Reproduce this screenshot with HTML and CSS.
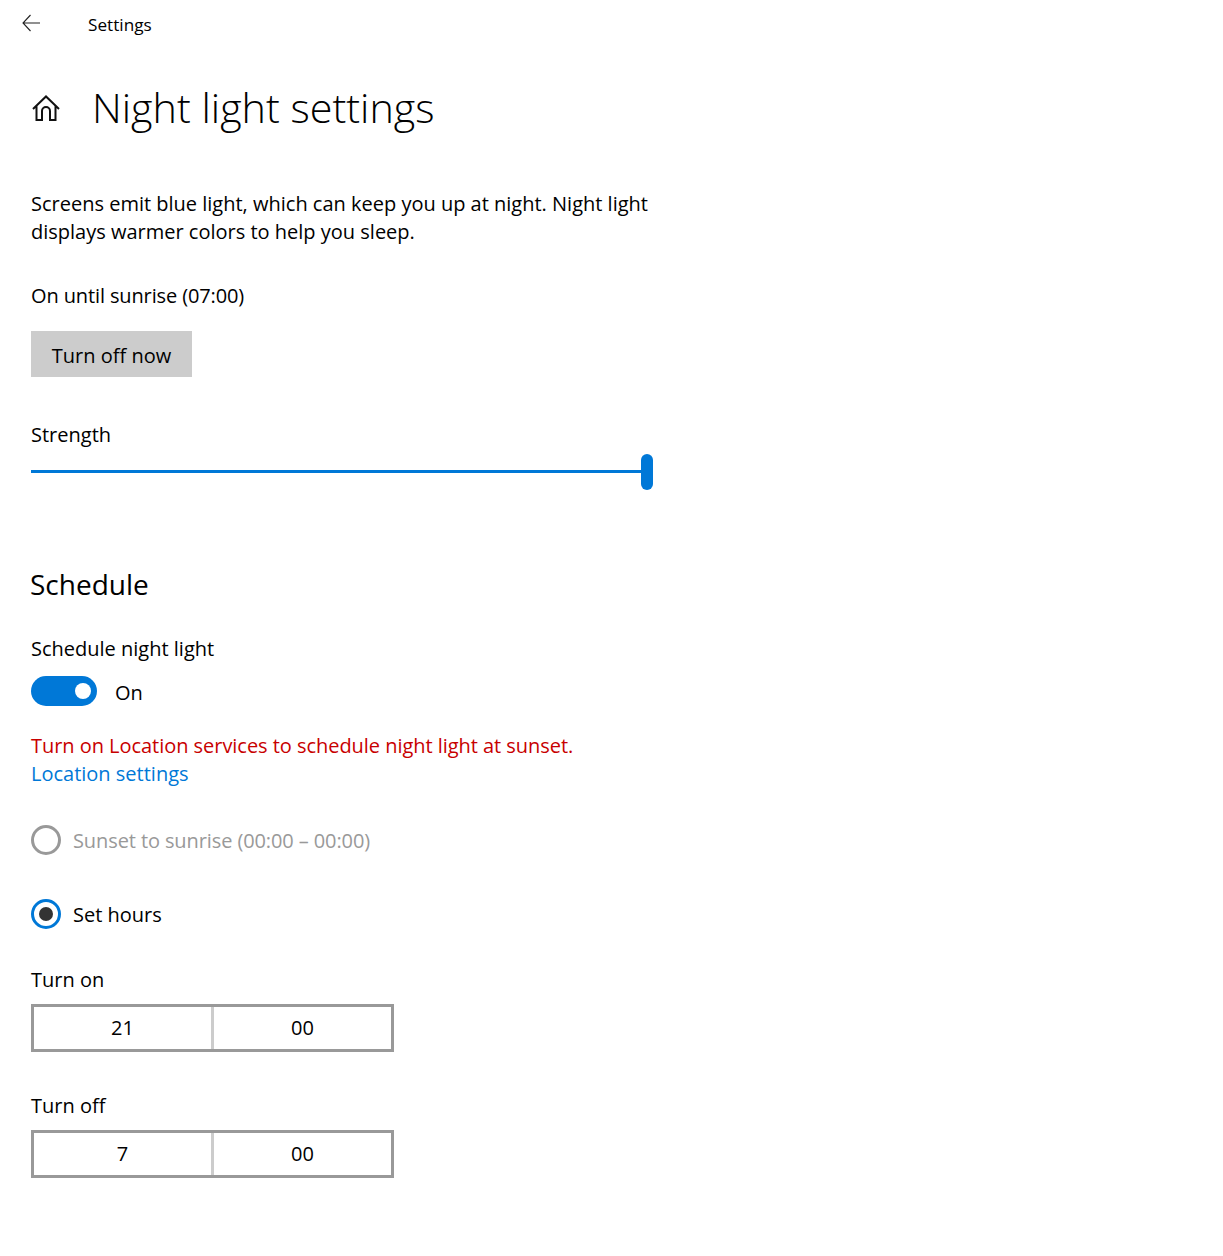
FILE: index.html
```html
<!DOCTYPE html>
<html lang="en">
<head>
<meta charset="utf-8">
<title>Settings</title>
<link rel="stylesheet" href="styles.css">
</head>
<body>
<header class="titlebar">
  <svg class="back" width="20" height="18" viewBox="0 0 20 18" fill="none" stroke="#222" stroke-width="1.1"><path d="M19 9H2M9.500 1L2 9l7.500 8"/></svg>
  <span class="app">Settings</span>
</header>
<main class="content">
  <div class="heading">
    <svg class="home" width="30" height="30" viewBox="0 0 30 30" fill="none" stroke="#111" stroke-width="2"><path d="M2 16L15 3.500 28 16M5.500 13V27H11V18a4 4 0 0 1 8 0V27H24.500V13"/></svg>
    <h1>Night light settings</h1>
  </div>
  <p class="intro">Screens emit blue light, which can keep you up at night. Night light displays warmer colors to help you sleep.</p>
  <p class="status">On until sunrise (07:00)</p>
  <button class="btn">Turn off now</button>
  <p class="strength">Strength</p>
  <div class="slider"><div class="thumb"></div></div>
  <h2>Schedule</h2>
  <p class="sched">Schedule night light</p>
  <div class="toggle-row"><span class="toggle"><span class="knob"></span></span><span class="toggle-label">On</span></div>
  <p class="warn">Turn on Location services to schedule night light at sunset.</p>
  <a class="link">Location settings</a>
  <div class="radio-row disabled"><span class="radio"></span><span class="radio-label sunset">Sunset to sunrise (00:00 – 00:00)</span></div>
  <div class="radio-row second"><span class="radio on"></span><span class="radio-label">Set hours</span></div>
  <p class="tlabel first">Turn on</p>
  <div class="time"><span class="cell">21</span><span class="cell">00</span></div>
  <p class="tlabel">Turn off</p>
  <div class="time"><span class="cell">7</span><span class="cell">00</span></div>
</main>
</body>
</html>
```
FILE: styles.css
```css
* { box-sizing: border-box; }
html, body { margin: 0; background: #fff; }
body { font-family: "Open Sans", "Noto Sans", sans-serif; font-size: 20px; line-height: 28px; color: #000; width: 1223px; height: 1256px; overflow: hidden; }
p { margin: 0; }
.titlebar { display: flex; align-items: center; height: 48px; padding-left: 21px; }
.back { margin-top: -2px; }
.app { margin-left: 47px; margin-top: 2px; font-size: 17.200px; }
.content { padding-left: 31px; }
.heading { display: flex; align-items: center; margin-top: 32px; height: 56px; }
.home { margin-right: 31px; }
h1 { margin: -2px 0 0; font-size: 41.300px; font-weight: 300; line-height: 56px; }
.intro { margin-top: 54px; width: 640px; }
.status { margin-top: 36px; letter-spacing: -0.120px; }
.btn { display: block; margin-top: 21px; width: 161px; height: 46px; border: 0; background: #ccc; font: inherit; color: #000; padding: 4px 0 0; }
.strength { margin-top: 44px; }
.slider { position: relative; margin-top: 21px; width: 622px; height: 3px; background: #0078d7; }
.thumb { position: absolute; right: 0; top: -16px; width: 12px; height: 36px; border-radius: 6px; background: #0078d7; }
h2 { margin: 91px 0 0 -1px; font-size: 28px; font-weight: 400; line-height: 40px; }
.sched { margin-top: 31px; }
.toggle-row { display: flex; align-items: center; gap: 18px; margin-top: 13px; height: 30px; }
.toggle-label { padding-top: 4px; }
.toggle { position: relative; width: 66px; height: 30px; border-radius: 15px; background: #0078d7; }
.knob { position: absolute; right: 6px; top: 7px; width: 16px; height: 16px; border-radius: 50%; background: #fff; }
.warn { margin-top: 26px; color: #c80000; letter-spacing: -0.040px; }
.link { display: block; color: #0078d7; }
.radio-row { display: flex; align-items: center; gap: 12px; height: 30px; margin-top: 37px; }
.radio-row.second { margin-top: 44px; }
.radio-label { padding-top: 2px; }
.sunset { letter-spacing: -0.100px; }
.disabled { color: #999; }
.radio { position: relative; width: 30px; height: 30px; border: 3px solid #999; border-radius: 50%; }
.radio.on { border-color: #0078d7; }
.radio.on::after { content: ""; position: absolute; left: 5px; top: 5px; width: 14px; height: 14px; border-radius: 50%; background: #333; }
.tlabel { margin-top: 40px; margin-bottom: 10px; }
.tlabel.first { margin-top: 37px; }
.time { display: flex; width: 363px; height: 48px; border: 3px solid #999; }
.cell { flex: 1; display: flex; align-items: center; justify-content: center; }
.cell + .cell { border-left: 3px solid #ccc; }
```
